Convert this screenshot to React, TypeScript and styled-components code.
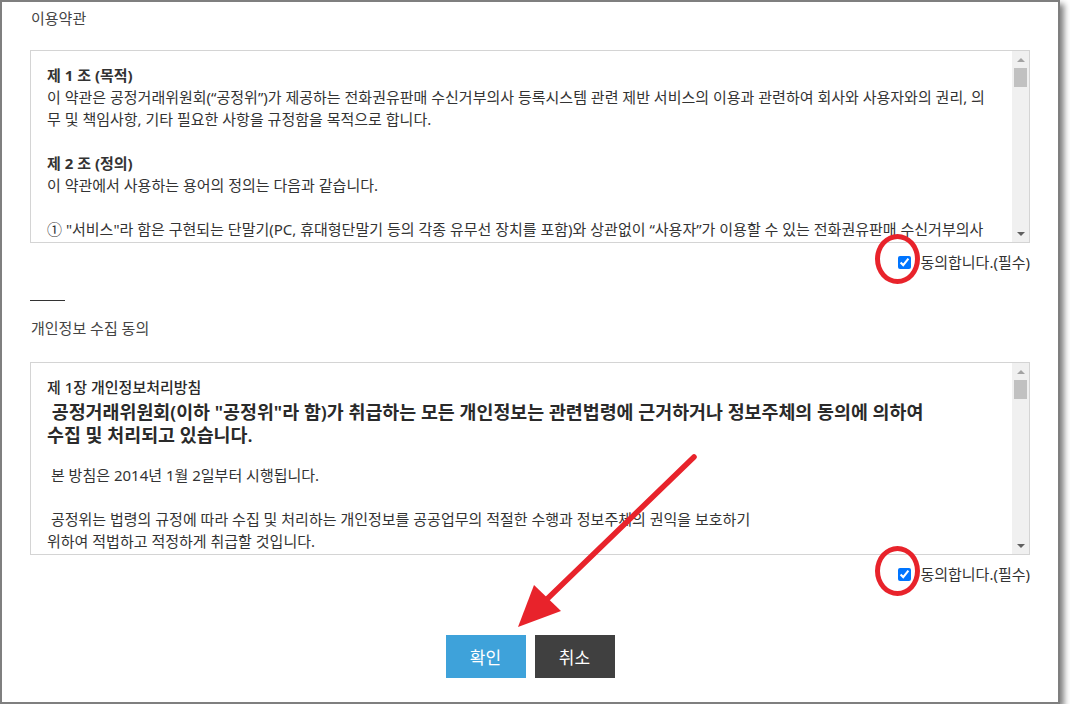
import React from "react";
import styled, { createGlobalStyle } from "styled-components";

const GlobalStyle = createGlobalStyle`
  html, body {
    margin: 0;
    padding: 0;
    background: #fff;
  }
  body {
    font-family: "Noto Sans", "Noto Sans CJK KR", sans-serif;
    overflow: hidden;
  }
`;

const Window = styled.div`
  position: relative;
  box-sizing: border-box;
  width: 1060px;
  height: 704px;
  border: 2px solid #7f7f7f;
  box-shadow: 4px 4px 6px rgba(0, 0, 0, 0.5);
  padding: 6px 28px 0;
  background: #fff;
`;

const SectionTitle = styled.div<{ $gap?: number }>`
  font-size: 15px;
  line-height: 20px;
  color: #444;
  padding-left: 1px;
  margin-bottom: ${(p) => p.$gap ?? 22}px;
`;

const TermsBox = styled.div`
  display: flex;
  box-sizing: border-box;
  height: 193px;
  border: 1px solid #d4d4d4;
  background: #fff;
`;

const TermsText = styled.div`
  flex: 1;
  overflow: hidden;
  padding: 13px 16px 0;
  font-size: 15px;
  line-height: 22px;
  color: #333;
  white-space: nowrap;

  p {
    margin: 0;
  }
  .blank {
    height: 22px;
  }
`;

const Article = styled.p`
  font-weight: 700;
`;

const Chapter = styled.p`
  font-weight: 500;
  color: #2a2a2a;
`;

const Lead = styled.p`
  font-size: 18.4px;
  line-height: 23px;
  font-weight: 600;
  color: #2a2a2a;
  margin-top: 2px !important;
  margin-bottom: 18px !important;
`;

const Scrollbar = styled.div`
  width: 17px;
  display: flex;
  flex-direction: column;
  background: #f0f0f0;
`;

const ScrollArrow = styled.div<{ $down?: boolean; $active?: boolean }>`
  height: 17px;
  display: flex;
  align-items: center;
  justify-content: center;

  &::before {
    content: "";
    width: 0;
    height: 0;
    border-left: 4px solid transparent;
    border-right: 4px solid transparent;
    ${(p) =>
      p.$down
        ? `border-top: 4px solid ${p.$active ? "#606060" : "#a3a3a3"};`
        : `border-bottom: 4px solid ${p.$active ? "#606060" : "#a3a3a3"};`}
  }
`;

const ScrollTrack = styled.div`
  flex: 1;
  padding: 0 2px;
`;

const ScrollThumb = styled.div`
  height: 19px;
  background: #c1c1c1;
`;

const AgreeRow = styled.div`
  display: flex;
  justify-content: flex-end;
  align-items: center;
  padding-top: 9px;
  height: 20px;
`;

const AgreeLabel = styled.label`
  display: flex;
  align-items: center;
  font-size: 15px;
  line-height: 20px;
  color: #333;
`;

const CheckWrap = styled.span`
  position: relative;
  display: flex;
  margin-right: 9px;
`;

const Check = styled.input`
  width: 13px;
  height: 13px;
  margin: 0;
  accent-color: #0075ff;
`;

const Ring = styled.span`
  position: absolute;
  left: -23px;
  top: -22px;
  width: 35px;
  height: 40px;
  border: 5px solid #e8232b;
  border-radius: 50%;
  pointer-events: none;
`;

const Divider = styled.div`
  width: 35px;
  height: 1px;
  background: #333;
  margin: 28px 0 17px 0;
`;

const ButtonBar = styled.div`
  display: flex;
  justify-content: center;
  gap: 9px;
  margin-top: 51px;
`;

const ActionButton = styled.button<{ $primary?: boolean }>`
  width: 80px;
  height: 43px;
  border: 0;
  padding: 0;
  background: ${(p) => (p.$primary ? "#3ea2da" : "#404040")};
  color: #fff;
  font-family: inherit;
  font-size: 17px;
  cursor: pointer;
`;

const Annotation = styled.svg`
  position: absolute;
  left: 498px;
  top: 440px;
  pointer-events: none;
`;

const ScrollPane = ({ children }: { children: React.ReactNode }) => (
  <TermsBox>
    <TermsText>{children}</TermsText>
    <Scrollbar>
      <ScrollArrow />
      <ScrollTrack>
        <ScrollThumb />
      </ScrollTrack>
      <ScrollArrow $down $active />
    </Scrollbar>
  </TermsBox>
);

const Agree = () => (
  <AgreeRow>
    <AgreeLabel>
      <CheckWrap>
        <Ring />
        <Check type="checkbox" defaultChecked />
      </CheckWrap>
      동의합니다.(필수)
    </AgreeLabel>
  </AgreeRow>
);

const App = () => {
  return (
    <>
      <GlobalStyle />
      <Window>
        <SectionTitle>이용약관</SectionTitle>
        <ScrollPane>
          <Article>제 1 조 (목적)</Article>
          <p>
            이 약관은 공정거래위원회(“공정위”)가 제공하는 전화권유판매 수신거부의사 등록시스템 관련 제반 서비스의 이용과 관련하여 회사와 사용자와의 권리, 의
          </p>
          <p>무 및 책임사항, 기타 필요한 사항을 규정함을 목적으로 합니다.</p>
          <div className="blank" />
          <Article>제 2 조 (정의)</Article>
          <p>이 약관에서 사용하는 용어의 정의는 다음과 같습니다.</p>
          <div className="blank" />
          <p>
            ① "서비스"라 함은 구현되는 단말기(PC, 휴대형단말기 등의 각종 유무선 장치를 포함)와 상관없이 “사용자”가 이용할 수 있는 전화권유판매 수신거부의사
          </p>
          <p>등록시스템 관련 제반 서비스를 의미합니다.</p>
        </ScrollPane>
        <Agree />

        <Divider />
        <SectionTitle $gap={24}>개인정보 수집 동의</SectionTitle>
        <ScrollPane>
          <Chapter>제 1장 개인정보처리방침</Chapter>
          <Lead>
            &nbsp;공정거래위원회(이하 "공정위"라 함)가 취급하는 모든 개인정보는 관련법령에 근거하거나 정보주체의 동의에 의하여
            <br />
            수집 및 처리되고 있습니다.
          </Lead>
          <p>&nbsp;본 방침은 2014년 1월 2일부터 시행됩니다.</p>
          <div className="blank" />
          <p>
            &nbsp;공정위는 법령의 규정에 따라 수집 및 처리하는 개인정보를 공공업무의 적절한 수행과 정보주체의 권익을 보호하기
          </p>
          <p>위하여 적법하고 적정하게 취급할 것입니다.</p>
        </ScrollPane>
        <Agree />

        <ButtonBar>
          <ActionButton $primary>확인</ActionButton>
          <ActionButton>취소</ActionButton>
        </ButtonBar>

        <Annotation width="210" height="200" viewBox="498 440 210 200">
          <line
            x1="692"
            y1="455"
            x2="542"
            y2="600"
            stroke="#e8232b"
            strokeWidth="5.5"
            strokeLinecap="round"
          />
          <polygon points="516,625 532,583 559,609" fill="#e8232b" />
        </Annotation>
      </Window>
    </>
  );
};

export default App;
